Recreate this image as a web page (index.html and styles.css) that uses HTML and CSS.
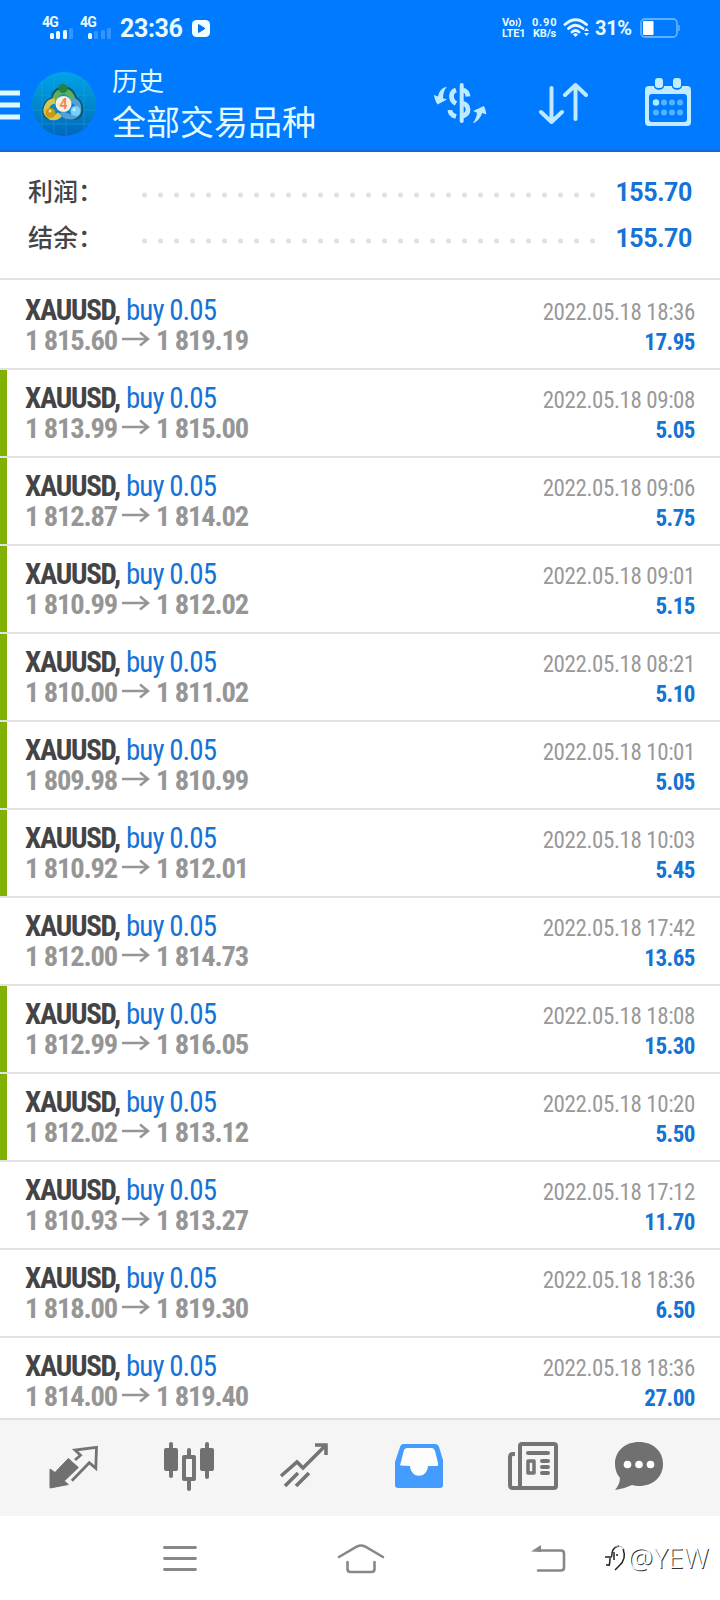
FILE: index.html
```html
<!DOCTYPE html>
<html lang="zh-CN">
<head>
<meta charset="utf-8">
<title>历史</title>
<link rel="stylesheet" href="styles.css">
</head>
<body>
<div class="screen">
<header class="header">
  <div class="status">
    <div class="sim"><b>4G</b><svg width="24" height="12" viewBox="0 0 24 12"><g fill="#e9fbff"><rect x="0" y="5" width="4" height="6" rx="1.5"/><rect x="6" y="3" width="4" height="8" rx="1.5"/><rect x="13" y="2" width="4" height="9" rx="1.5"/><rect x="19" y="0" width="4" height="11" rx="1.5" opacity=".22"/></g></svg></div>
    <div class="sim"><b>4G</b><svg width="24" height="12" viewBox="0 0 24 12"><g fill="#e9fbff"><rect x="0" y="5" width="4" height="6" rx="1.5"/><rect x="6" y="3" width="4" height="8" rx="1.5" opacity=".22"/><rect x="13" y="2" width="4" height="9" rx="1.5" opacity=".22"/><rect x="19" y="0" width="4" height="11" rx="1.5" opacity=".22"/></g></svg></div>
    <span class="clock">23:36</span>
    <svg class="play" width="18" height="17" viewBox="0 0 18 17"><rect width="18" height="17" rx="4.5" fill="#f2ffff"/><path d="M6.500 4.500v8l6.500-4z" fill="#0a6ff0" stroke="#0a6ff0" stroke-linejoin="round"/></svg>
    <span class="grow"></span>
    <span class="tiny volte">Vo<svg width="8" height="10" viewBox="0 0 8 10"><path d="M1 3q2 2 0 6M3.500 1q4 4 0 9" fill="none" stroke="#dff4ff" stroke-width="1.400"/></svg><br>LTE1</span>
    <span class="tiny speed"><i>0.90</i><br>KB/s</span>
    <svg class="wifi" width="27" height="20" viewBox="0 0 27 20"><g fill="none" stroke="#e6f8ff" stroke-width="2.900" stroke-linecap="round"><path d="M2 6.500Q12.500-3 23.500 6.500"/><path d="M5.500 10.500Q12.500 4 20 10.500"/><path d="M9 14q3.500-3 7 0"/></g><path d="M10 16.500q2.500-2.500 5 0L12.500 19z" fill="#fff"/><path d="M21 13l2.500-3 2.500 3zM21 15h5l-2.500 3z" fill="#e6f8ff"/></svg>
    <span class="percent">31%</span>
    <svg class="battery" width="40" height="20" viewBox="0 0 40 20"><rect x="1" y="1" width="36" height="18" rx="4" fill="none" stroke="#5fb1ff" stroke-width="1.800"/><rect x="3" y="3" width="10.500" height="14" rx="1" fill="#fff"/><path d="M39 7v6" stroke="#5fb1ff" stroke-width="1.500"/></svg>
  </div>
  <div class="toolbar">
    <svg class="menu" width="20" height="30" viewBox="0 0 20 30"><path d="M0 3h20M0 15h20M0 27h20" stroke="#dffaff" stroke-width="5"/></svg>
    <svg class="logo" width="64" height="64" viewBox="0 0 64 64">
      <defs><linearGradient id="sea" x1="0" y1="0" x2="0" y2="1"><stop offset="0" stop-color="#00a3ea"/><stop offset=".5" stop-color="#0089cb"/><stop offset="1" stop-color="#0266be"/></linearGradient></defs>
      <circle cx="32" cy="32" r="32" fill="url(#sea)"/>
      <path d="M10 9v46M22 3v58M34 1v62M52 8v48M3 23h58M1 38h62M6 52h52" stroke="#27a8df" stroke-width=".8" opacity=".55"/>
      <path d="M18 44c-8 1-6-14 4-17M22 28c-1-14 20-15 20 1M42 27c8 4 9 18 0 18" fill="none" stroke="#075b78" stroke-width="6"/>
      <path d="M23 30c-1-14 18-15 18 1" fill="none" stroke="#62ae54" stroke-width="5.500"/>
      <path d="M23 29c-8 0-11 10-7 14 4 4 9 3 12-1" fill="none" stroke="#d6c650" stroke-width="5.500"/>
      <path d="M40 28c8 2 9 14 2 16-5 1-10 0-12-4" fill="none" stroke="#559fd2" stroke-width="5.500"/>
      <circle cx="31" cy="16.500" r="4.500" fill="#24843f"/><circle cx="18.500" cy="41" r="5" fill="#c99710"/><circle cx="43.500" cy="39" r="5" fill="#79d0ff"/>
      <circle cx="18" cy="39" r="1.500" fill="#f5e394"/><circle cx="42" cy="37.500" r="1.500" fill="#caf0ff"/>
      <circle cx="31.500" cy="32" r="8" fill="#f8eee2"/><text x="31.500" y="37" text-anchor="middle" class="four">4</text>
    </svg>
    <div class="titles"><div class="title">历史</div><div class="subtitle">全部交易品种</div></div>
    <svg class="act currency" width="54" height="44" viewBox="0 0 54 44">
      <g fill="none" stroke="#bfe9ff"><path d="M27.700 4v36" stroke-width="4" stroke-linecap="round"/><path d="M22 9c-6 2-6 10 0 13.500M29 9c3 .5 4.500 2.500 5 6.500M28 22c8 2 8 11 0 13.500M16 29c0 3 2.500 5.500 6 6.500" stroke-width="4.800"/></g>
      <path d="M0 14l4 1.500C5 10 8 6.500 13 5.700 10 9 9 13 9 17.300l4 1.200L3.500 23.500C1.500 20.500.3 17 0 14zM52.300 33.500l-4-1.500c-2 5-5 9-9.500 10.300 2.500-3.500 4-7 4.200-10.600l-3.800-1.800 10.600-5c1.500 2.500 2.300 5.600 2.500 8.600z" fill="#bfe9ff"/>
    </svg>
    <svg class="act sort" width="50" height="44" viewBox="0 0 50 44"><path d="M13.500 7v34M3 31l10.500 10L24 31M37.500 38V4M27 14L37.500 4 48 14" fill="none" stroke="#bfe9ff" stroke-width="4" stroke-linecap="round" stroke-linejoin="round"/></svg>
    <svg class="act cal" width="46" height="48" viewBox="0 0 46 48"><path fill-rule="evenodd" d="M4 8h5c0 5 10 5 10 0h8c0 5 10 5 10 0h5q4 0 4 4v32q0 4-4 4H4q-4 0-4-4V12q0-4 4-4zm3 8q-3 0-3 3v22q0 3 3 3h32q3 0 3-3V19q0-3-3-3z" fill="#c4ecff"/><rect x="10" y="0" width="8" height="10" rx="3" fill="#c4ecff"/><rect x="28" y="0" width="8" height="10" rx="3" fill="#c4ecff"/><circle cx="11" cy="24.500" r="3.200" fill="#aeeaff"/><g fill="#55b4ff"><circle cx="19" cy="24.500" r="3"/><circle cx="27" cy="24.500" r="3"/><circle cx="35" cy="24.500" r="3"/><circle cx="11" cy="34.500" r="3"/><circle cx="19" cy="34.500" r="3"/><circle cx="27" cy="34.500" r="3"/><circle cx="35" cy="34.500" r="3"/></g></svg>
  </div>
</header>
<section class="summary">
  <div class="sum"><span class="label">利润：</span><span class="dots"></span><span class="total">155.70</span></div>
  <div class="sum"><span class="label">结余：</span><span class="dots"></span><span class="total">155.70</span></div>
</section>
<main class="deals">
<svg class="defs" width="0" height="0"><defs><symbol id="arrow" viewBox="0 0 28 16"><path d="M0 8h26M18 1.500L26 8l-8 6.500" fill="none" stroke="#969696" stroke-width="2.500"/></symbol></defs></svg>
<article class="deal first"><div class="left"><div class="name"><b>XAUUSD,</b><span>buy 0.05</span></div><div class="price"><span>1 815.60</span><svg><use href="#arrow"/></svg><span>1 819.19</span></div></div><div class="right"><div class="date">2022.05.18 18:36</div><div class="profit">17.95</div></div></article>
<article class="deal mark"><div class="left"><div class="name"><b>XAUUSD,</b><span>buy 0.05</span></div><div class="price"><span>1 813.99</span><svg><use href="#arrow"/></svg><span>1 815.00</span></div></div><div class="right"><div class="date">2022.05.18 09:08</div><div class="profit">5.05</div></div></article>
<article class="deal mark"><div class="left"><div class="name"><b>XAUUSD,</b><span>buy 0.05</span></div><div class="price"><span>1 812.87</span><svg><use href="#arrow"/></svg><span>1 814.02</span></div></div><div class="right"><div class="date">2022.05.18 09:06</div><div class="profit">5.75</div></div></article>
<article class="deal mark"><div class="left"><div class="name"><b>XAUUSD,</b><span>buy 0.05</span></div><div class="price"><span>1 810.99</span><svg><use href="#arrow"/></svg><span>1 812.02</span></div></div><div class="right"><div class="date">2022.05.18 09:01</div><div class="profit">5.15</div></div></article>
<article class="deal mark"><div class="left"><div class="name"><b>XAUUSD,</b><span>buy 0.05</span></div><div class="price"><span>1 810.00</span><svg><use href="#arrow"/></svg><span>1 811.02</span></div></div><div class="right"><div class="date">2022.05.18 08:21</div><div class="profit">5.10</div></div></article>
<article class="deal mark"><div class="left"><div class="name"><b>XAUUSD,</b><span>buy 0.05</span></div><div class="price"><span>1 809.98</span><svg><use href="#arrow"/></svg><span>1 810.99</span></div></div><div class="right"><div class="date">2022.05.18 10:01</div><div class="profit">5.05</div></div></article>
<article class="deal mark"><div class="left"><div class="name"><b>XAUUSD,</b><span>buy 0.05</span></div><div class="price"><span>1 810.92</span><svg><use href="#arrow"/></svg><span>1 812.01</span></div></div><div class="right"><div class="date">2022.05.18 10:03</div><div class="profit">5.45</div></div></article>
<article class="deal"><div class="left"><div class="name"><b>XAUUSD,</b><span>buy 0.05</span></div><div class="price"><span>1 812.00</span><svg><use href="#arrow"/></svg><span>1 814.73</span></div></div><div class="right"><div class="date">2022.05.18 17:42</div><div class="profit">13.65</div></div></article>
<article class="deal mark"><div class="left"><div class="name"><b>XAUUSD,</b><span>buy 0.05</span></div><div class="price"><span>1 812.99</span><svg><use href="#arrow"/></svg><span>1 816.05</span></div></div><div class="right"><div class="date">2022.05.18 18:08</div><div class="profit">15.30</div></div></article>
<article class="deal mark"><div class="left"><div class="name"><b>XAUUSD,</b><span>buy 0.05</span></div><div class="price"><span>1 812.02</span><svg><use href="#arrow"/></svg><span>1 813.12</span></div></div><div class="right"><div class="date">2022.05.18 10:20</div><div class="profit">5.50</div></div></article>
<article class="deal"><div class="left"><div class="name"><b>XAUUSD,</b><span>buy 0.05</span></div><div class="price"><span>1 810.93</span><svg><use href="#arrow"/></svg><span>1 813.27</span></div></div><div class="right"><div class="date">2022.05.18 17:12</div><div class="profit">11.70</div></div></article>
<article class="deal"><div class="left"><div class="name"><b>XAUUSD,</b><span>buy 0.05</span></div><div class="price"><span>1 818.00</span><svg><use href="#arrow"/></svg><span>1 819.30</span></div></div><div class="right"><div class="date">2022.05.18 18:36</div><div class="profit">6.50</div></div></article>
<article class="deal"><div class="left"><div class="name"><b>XAUUSD,</b><span>buy 0.05</span></div><div class="price"><span>1 814.00</span><svg><use href="#arrow"/></svg><span>1 819.40</span></div></div><div class="right"><div class="date">2022.05.18 18:36</div><div class="profit">27.00</div></div></article>
</main>
<nav class="tabs">
  <svg width="52" height="52" viewBox="0 0 52 52"><path d="M3 27l5 3.500 13.300-14 10 9L17.300 39l4 3.500L3 46z" fill="#707070" stroke="#707070" stroke-linejoin="round"/><path d="M28 18l5.500-4.700L28 8l21.500-2.700-.7 21-6.500-5.600-17.500 18" fill="none" stroke="#747474" stroke-width="2.800"/></svg>
  <svg width="52" height="52" viewBox="0 0 52 52"><path d="M8 2v32M26 8v39M44 2v33" stroke="#747474" stroke-width="4" stroke-linecap="round"/><rect x="1" y="6" width="14" height="23" rx="2" fill="#707070"/><rect x="37" y="6" width="14" height="23" rx="2" fill="#707070"/><rect x="21" y="15" width="10" height="22" fill="#f5f5f5" stroke="#747474" stroke-width="4" stroke-linejoin="round"/></svg>
  <svg width="52" height="52" viewBox="0 0 52 52"><path d="M3 34L19 20l6 6L47 4M37 3h11v10M7 44l13-13M18 44l13-13" fill="none" stroke="#747474" stroke-width="3.600"/></svg>
  <svg width="52" height="52" viewBox="0 0 52 52"><path d="M10 2h32q3 0 4 3l4 13v25q0 3-3 3H5q-3 0-3-3V20L7 5q1-3 3-3z" fill="#439cfe"/><path d="M7 23.500L11 8q1-2 3-2h25q2 0 3 3l3 12q.5 3-1 3h-9c-1 13-17 13-18 0z" fill="#fdfdfd"/></svg>
  <svg width="52" height="52" viewBox="0 0 52 52"><g fill="none" stroke="#747474" stroke-width="4" stroke-linejoin="round"><rect x="13" y="2" width="36" height="44" rx="2"/><path d="M8 12H6q-3 0-3 3v28q0 3 3 3h10"/><path d="M21 11h20M35 19h6M35 25h6M35 31h6" stroke-linecap="round"/><rect x="21" y="19" width="6" height="12" stroke-width="3.500"/></g></svg>
  <svg width="52" height="52" viewBox="0 0 52 52"><path d="M26 0c14 0 24 9 24 22S40 44 26 44q-4 0-7-1-8 4-17 5 5-6 5-12Q2 30 2 22C2 9 12 0 26 0z" fill="#707070"/><g fill="#fff"><circle cx="14.500" cy="22.500" r="3.800"/><circle cx="26" cy="22.500" r="3.800"/><circle cx="37.500" cy="22.500" r="3.800"/></g></svg>
</nav>
<footer class="system">
  <svg width="34" height="28" viewBox="0 0 34 28"><path d="M1.500 2.500h31M1.500 13.500h31M1.500 24.500h31" stroke="#888" stroke-width="2.800" stroke-linecap="round"/></svg>
  <svg width="48" height="32" viewBox="0 0 48 32"><path d="M2 14L20 3.500q4-2 8 0L46 14M10.500 19v7q0 3 3 3h21q3 0 3-3v-7" fill="none" stroke="#888" stroke-width="2.600" stroke-linecap="round"/></svg>
  <svg width="36" height="30" viewBox="0 0 36 30"><path d="M9 6.500h22q3 0 3 3v14q0 3-3 3H8" fill="none" stroke="#888" stroke-width="2.600" stroke-linecap="round"/><path d="M1 7.500L11 1v7z" fill="#888"/></svg>
  <div class="sign"><svg width="24" height="28" viewBox="0 0 24 28"><path d="M5 22q1-3 1-8M1 13h6q1 0 1-4 1-6 7-7M2 21h3M10 8v8M12 11h2M19 5q4 10-4 17l-4 4" fill="none" stroke="#222" stroke-width="1.500"/><path d="M11 3q7-3 10 4" fill="none" stroke="#aaa" stroke-width=".8"/></svg><span>@YEW</span></div>
</footer>
</div>
</body>
</html>
```
FILE: styles.css
```css
body{margin:0;background:#fff;font-family:Roboto,"Noto Sans CJK SC",sans-serif}
svg{display:block;flex:none}
.screen{width:720px;height:1600px;overflow:hidden;display:flex;flex-direction:column}
.header{height:152px;box-sizing:border-box;background:#007aff;border-bottom:2px solid #1767d2;flex:none}
.status{height:56px;display:flex;align-items:center;color:#e9fbff;padding:0 40px 0 42px}
.sim{width:38px;height:22px;font-size:14px;line-height:11px;flex:none}
.sim b{display:block;height:11px;letter-spacing:-.8px}
.sim svg{margin-left:8px}
.clock{font-size:25px;font-weight:700;width:72px;margin-left:2px;letter-spacing:-.4px}
.grow{flex:1}
.tiny{font-size:11px;line-height:11px;font-weight:700;letter-spacing:-.2px;white-space:nowrap}
.tiny svg{display:inline-block;vertical-align:-1px}
.tiny i{font-style:normal;letter-spacing:.8px}
.volte{width:30px}
.speed{width:25px;text-align:center}
.wifi{margin-left:6px}
.percent{font-size:20px;font-weight:700;margin-left:5px;width:37px;letter-spacing:-.3px}
.battery{margin-left:8px}
.toolbar{display:flex;align-items:flex-start}
.menu{margin-top:34px}
.logo{margin:16px 0 0 12px}
.four{font:bold 14px Roboto,sans-serif;fill:#f08a54}
.titles{margin-left:16px;color:#e2fbff;width:322px;font-family:"Noto Sans CJK SC",sans-serif;font-weight:400}
.title{font-size:26px;line-height:32px;margin-top:8px}
.subtitle{font-size:34px;line-height:42px;margin-top:4px}
.currency{margin-top:25px}
.sort{margin:25px 0 0 50px}
.cal{margin:22px 0 0 57px}
.summary{height:128px;padding-top:17px;box-sizing:border-box;border-bottom:2px solid #e2e2e2;flex:none}
.sum{height:46px;display:flex;align-items:center;padding:0 28px}
.label{font:500 25px "Noto Sans CJK SC",sans-serif;color:#444;width:109px;white-space:nowrap;margin-top:-4px}
.dots{width:464px;height:6px;margin-top:6px;background:radial-gradient(circle at 7.5px 3px,#e0e0e0 2px,transparent 3px) 0 0/16px 6px}
.total{font-size:25px;font-weight:700;color:#1673d6;margin-left:auto;letter-spacing:-.4px}
.deals{height:1138px;overflow:hidden;flex:none;font-family:"Roboto Condensed",Roboto,sans-serif;font-stretch:75%}
.defs{position:absolute}
.deal{height:88px;box-sizing:border-box;border-bottom:2px solid #e2e2e2;padding:11px 25px 0 25px;display:flex;justify-content:space-between;white-space:nowrap}
.first{height:90px;padding-top:13px}
.mark{background:linear-gradient(#7fb003,#7fb003) left top/7px 86px no-repeat}
.name{font-size:29px;line-height:34px;height:34px;display:flex;color:#444}
.name b{width:101px;letter-spacing:-1.3px}
.name span{color:#1673d6;letter-spacing:-.95px}
.price{font-size:28.5px;font-weight:700;line-height:28px;color:#969696;display:flex;letter-spacing:-1.15px}
.price span{width:97px}
.price svg{width:28px;height:16px;margin:4px 6px 0 0}
.right{text-align:right;padding-top:5px}
.date{font-size:23px;line-height:30px;color:#999;letter-spacing:-.42px}
.profit{font-size:23px;line-height:30px;font-weight:700;color:#1673d6;letter-spacing:-.5px}
.tabs{height:98px;box-sizing:border-box;background:#f5f5f5;border-top:2px solid #e0e0e0;display:grid;grid-template-columns:115.5px 115.5px 114.5px 114.5px 106px 52px;padding:22px 0 0 47px;flex:none}
.system{height:84px;display:flex;align-items:flex-start;padding:29px 0 0 163px}
.system>svg:nth-child(2){margin:-2px 0 0 140px}
.system>svg:nth-child(3){margin:-1px 0 0 145px}
.sign{display:flex;margin:-3px 0 0 38px;font:300 28px "Noto Sans",sans-serif;line-height:30px;color:#fff;text-shadow:1px 1px 0 #333}
.sign svg{margin-top:2px}
```
